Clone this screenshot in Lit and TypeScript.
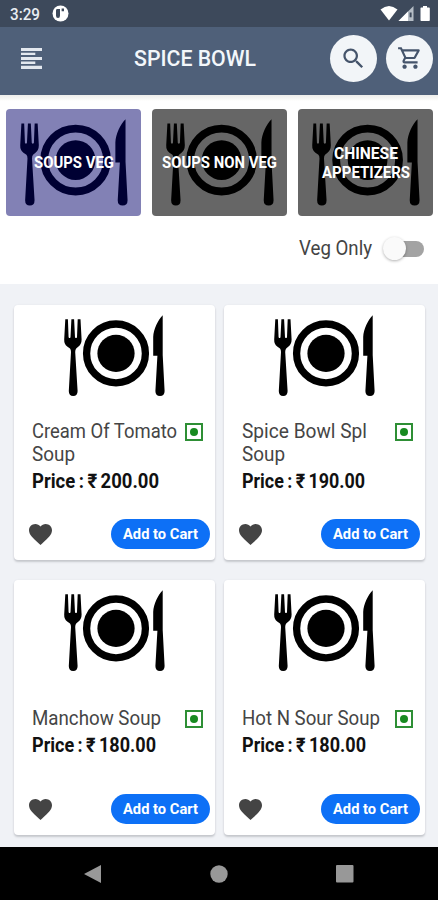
import { LitElement, html, css } from "lit";
import { customElement } from "lit/decorators.js";

// One line of text set to an exact measure.
@customElement("fit-line")
class FitLine extends LitElement {
  static properties = {
    text: { type: String },
    measure: { type: Number },
    line: { type: Number },
    base: { type: Number },
  };
  declare text: string;
  declare measure: number;
  declare line: number;
  declare base: number;
  static styles = css`
    :host { display: block; flex: none; }
    svg { display: block; overflow: visible; }
    text { fill: currentColor; white-space: pre; }
  `;
  render() {
    return html`<svg width=${this.measure} height=${this.line}>
      <text x="0" y=${this.base} textLength=${this.measure} lengthAdjust="spacingAndGlyphs">${this.text}</text>
    </svg>`;
  }
}

const fit = (text: string, measure: number, line: number, base: number) =>
  html`<fit-line .text=${text} .measure=${measure} .line=${line} .base=${base}></fit-line>`;

@customElement("plate-art")
class PlateArt extends LitElement {
  static styles = css`
    :host { display: block; }
    svg { display: block; width: 100%; height: 100%; fill: currentColor; }
    .ring { fill: none; stroke: currentColor; stroke-width: 7.3; }
  `;
  render() {
    return html`<svg viewBox="0 0 101 81">
      <path d="M1.3 4.3H3.9L4.6 22.2Q5.6 24 6.5 22.2L7.4 4.3H10.1L11 22.2Q12 24 13 22.2L13.7 4.3H16.5L17.6 24.5Q17.6 29 14.5 31.5L12.2 33.5Q11.2 34.6 11.2 37L13.6 76Q13.6 81 9.2 81Q4.8 81 4.8 76L7 37Q7 34.6 6 33.5L3.2 31.5Q0 29 0.2 24.5Z"/>
      <circle class="ring" cx="52" cy="38.4" r="29.4"/>
      <circle cx="52" cy="38.4" r="18.6"/>
      <path d="M98.7 0.2V40L100.6 76Q100.6 81 96 81Q91.4 81 91.4 76L93.4 40.8H89.2V22C89.5 14 94 5 98.7 0.2Z"/>
    </svg>`;
  }
}

interface Dish { lines: [string, number][]; price: [string, number]; }

@customElement("dish-card")
class DishCard extends LitElement {
  static properties = { dish: { attribute: false } };
  declare dish: Dish;
  static styles = css`
    :host { display: flex; flex-direction: column; box-sizing: border-box; height: 255px;
      padding: 10px 5.5px 10px 15px; background: #fff; border-radius: 4px;
      box-shadow: 0 2px 2px rgba(60, 65, 75, 0.22), 0 0 2px rgba(60, 65, 75, 0.08); }
    .art { width: 101px; height: 81px; margin: 0 0 0 35px; color: #000; }
    .info { height: 122px; margin-left: 3px; display: flex; flex-direction: column; justify-content: center; }
    .title { display: flex; justify-content: space-between; padding-right: 6.5px; }
    .name { font: 400 20px Roboto, sans-serif; color: #454545; }
    .price { font: 700 20px Roboto, sans-serif; color: #111; word-spacing: -1.2px; }
    .mark { box-sizing: border-box; width: 18px; height: 18px; margin-top: 2px; border: 2px solid #2e8f35;
      display: flex; align-items: center; justify-content: center; }
    .dot { width: 8px; height: 8px; border-radius: 50%; background: #188a20; }
    .foot { display: flex; justify-content: space-between; align-items: center; height: 32px; }
    .heart { width: 23px; height: 21px; fill: #444; }
    .add { display: flex; align-items: center; justify-content: center; width: 98.5px; height: 30px;
      border-radius: 15px; background: #0d70f6; color: #fff; font: 700 15.5px Roboto, sans-serif; }
  `;
  render() {
    const { lines, price } = this.dish;
    return html`
      <plate-art class="art"></plate-art>
      <div class="info">
        <div class="title">
          <div class="name">${lines.map(([t, w]) => fit(t, w, 23, 17))}</div>
          <div class="mark"><div class="dot"></div></div>
        </div>
        <div class="price">${fit(price[0], price[1], 26, 21)}</div>
      </div>
      <div class="foot">
        <svg class="heart" viewBox="2 3 20 18.35" preserveAspectRatio="none"><path d="M12 21.35l-1.45-1.32C5.4 15.36 2 12.28 2 8.5 2 5.42 4.42 3 7.5 3c1.74 0 3.41.81 4.5 2.09C13.09 3.81 14.76 3 16.5 3 19.58 3 22 5.42 22 8.5c0 3.78-3.4 6.86-8.55 11.54L12 21.35z"/></svg>
        <div class="add">${fit("Add to Cart", 75, 20, 15)}</div>
      </div>`;
  }
}

@customElement("app-root")
class AppRoot extends LitElement {
  static styles = css`
    :host { display: flex; flex-direction: column; width: 438px; height: 900px; overflow: hidden;
      background: #f0f2f6; font-family: Roboto, sans-serif; }
    .status { flex: none; box-sizing: border-box; height: 27px; padding: 0 8px 0 9.5px; display: flex; align-items: center;
      justify-content: space-between; background: #3d495b; color: #e9edf2; font: 500 16px Roboto, sans-serif; }
    .left, .right { display: flex; align-items: center; }
    .left { gap: 12px; }
    .right svg, .left svg { display: block; }
    .bar { flex: none; box-sizing: border-box; height: 68px; padding: 0 5px 6px 21px; display: flex; align-items: center;
      background: #4f6079; color: #f3f7fb; }
    .menu { width: 21px; height: 21px; fill: #e3e8ef; margin: 1px 92px 0 0; }
    .title { font: 500 22.5px Roboto, sans-serif; }
    .actions { margin-left: auto; display: flex; gap: 9px; }
    .round { width: 47px; height: 47px; border-radius: 50%; background: #f2f5f8; display: flex; align-items: center;
      justify-content: center; }
    .round svg { fill: #45546b; }
    .top { flex: none; box-sizing: border-box; height: 189px; background: linear-gradient(#eeeeeb 0, #f8f8f6 4px, #fff 6px);
      padding: 14px 5px 0 6px; }
    .tabs { display: flex; gap: 11px; }
    .tab { display: grid; place-items: center; width: 135px; height: 107px; border-radius: 4px; background: #666; color: #000; }
    .tab.on { background: #8281b5; color: #000033; }
    .tab > * { grid-area: 1 / 1; }
    .tab plate-art { width: 108px; height: 86.6px; }
    .label { display: flex; flex-direction: column; align-items: center; color: #fff; font: 700 17.2px Roboto, sans-serif; }
    .only { display: flex; align-items: center; justify-content: flex-end; gap: 16px; padding: 18px 9px 0 0;
      color: #444; font: 400 20px Roboto, sans-serif; }
    .switch { display: flex; align-items: center; box-sizing: border-box; width: 36px; height: 16px; border-radius: 8px;
      background: #a3a3a3; margin-top: 1px; }
    .thumb { flex: none; width: 23px; height: 23px; border-radius: 50%; background: #fafafa; margin-left: -5px;
      box-shadow: 0 1px 3px rgba(0, 0, 0, 0.3); }
    .dishes { flex: 1; display: grid; grid-template-columns: 201px 201px; grid-auto-rows: 255px; gap: 20px 9px;
      padding: 21px 0 0 14px; }
    .nav { flex: none; height: 53px; background: #000; display: flex; justify-content: space-between; align-items: center;
      box-sizing: border-box; padding: 0 84px; }
    .nav svg { fill: #989898; }
  `;

  private tabs: { on: boolean; lines: [string, number][] }[] = [
    { on: true, lines: [["SOUPS VEG", 80]] },
    { on: false, lines: [["SOUPS NON VEG", 115]] },
    { on: false, lines: [["CHINESE", 64], ["APPETIZERS", 88]] },
  ];

  private dishes: Dish[] = [
    { lines: [["Cream Of Tomato", 145], ["Soup", 43]], price: ["Price : ₹ 200.00", 127] },
    { lines: [["Spice Bowl Spl", 125], ["Soup", 43]], price: ["Price : ₹ 190.00", 123] },
    { lines: [["Manchow Soup", 129]], price: ["Price : ₹ 180.00", 124] },
    { lines: [["Hot N Sour Soup", 138]], price: ["Price : ₹ 180.00", 124] },
  ];

  render() {
    return html`
      <div class="status">
        <div class="left">
          ${fit("3:29", 30, 27, 20)}
          <svg width="17" height="17" viewBox="0 0 17 17"><circle cx="8.5" cy="8.5" r="8" fill="#fff"/><path d="M4 5.4Q4 4 5.4 4H8V10.5Q8 13 6 13Q4 13 4 10.8ZM9.6 3.5H12V6.2H9.6Z" fill="#3d495b"/></svg>
        </div>
        <div class="right">
          <svg width="50" height="17" viewBox="380 5 50 17"><path d="M380.5 9.5Q389 2.5 397.5 9.5L389 20.5Z" fill="#fff"/><path d="M398.5 21L413.5 6V21Z" fill="#b5bdc6"/><path d="M398.5 21L408 11.5V21Z" fill="#fff"/><path d="M409.6 12.5h2v4.8h-2z" fill="#3d495b"/><path d="M423 6h4v1.5h2q.8 0 .8.8V20.2q0 .8-.8.8H421.3q-.8 0-.8-.8V8.3q0-.8.8-.8H423Z" fill="#fff"/></svg>
        </div>
      </div>
      <div class="bar">
        <svg class="menu" viewBox="0 0 21 21"><path d="M0 0H21V3H0ZM0 4.7H14.3V7H0ZM0 8.9H21V12H0ZM0 13.6H14.3V16H0ZM0 17.8H21V21H0Z"/></svg>
        <div class="title">${fit("SPICE BOWL", 122, 28, 22)}</div>
        <div class="actions">
          <div class="round"><svg width="27" height="27" viewBox="0 0 24 24"><path d="M15.5 14h-.79l-.28-.27C15.41 12.59 16 11.11 16 9.5 16 5.91 13.09 3 9.5 3S3 5.91 3 9.5 5.91 16 9.5 16c1.61 0 3.09-.59 4.23-1.57l.27.28v.79l5 4.99L20.49 19l-4.99-5zm-6 0C7.01 14 5 11.99 5 9.5S7.01 5 9.5 5 14 7.01 14 9.5 11.99 14 9.5 14z"/></svg></div>
          <div class="round"><svg width="26" height="26" viewBox="0 0 24 24"><path d="M15.55 13c.75 0 1.41-.41 1.75-1.03l3.58-6.49c.37-.66-.11-1.48-.87-1.48H5.21l-.94-2H1v2h2l3.6 7.59-1.35 2.44C4.52 15.37 5.48 17 7 17h12v-2H7l1.1-2h7.45zM6.16 6h12.15l-2.76 5H8.53L6.16 6zM7 18c-1.1 0-1.99.9-1.99 2S5.9 22 7 22s2-.9 2-2-.9-2-2-2zm10 0c-1.1 0-1.99.9-1.99 2s.89 2 1.99 2 2-.9 2-2-.9-2-2-2z"/></svg></div>
        </div>
      </div>
      <div class="top">
        <div class="tabs">
          ${this.tabs.map((t) => html`<div class="tab ${t.on ? "on" : ""}">
            <plate-art></plate-art>
            <div class="label">${t.lines.map(([s, w]) => fit(s, w, 19, 15.3))}</div>
          </div>`)}
        </div>
        <div class="only">
          ${fit("Veg Only", 73, 28, 21)}
          <div class="switch"><div class="thumb"></div></div>
        </div>
      </div>
      <div class="dishes">${this.dishes.map((d) => html`<dish-card .dish=${d}></dish-card>`)}</div>
      <div class="nav">
        <svg width="17" height="18"><path d="M0 9L17 0V18Z"/></svg>
        <svg width="18" height="18"><circle cx="9" cy="9" r="8.7"/></svg>
        <svg width="18" height="18"><rect width="17.5" height="17.5" rx="1"/></svg>
      </div>`;
  }
}
